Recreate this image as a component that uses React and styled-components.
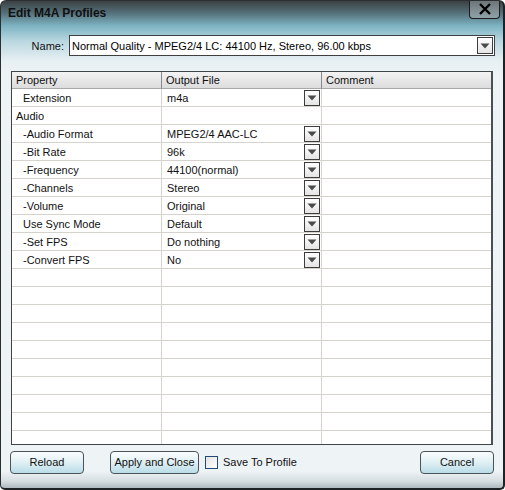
import styled, { createGlobalStyle } from "styled-components";

const Global = createGlobalStyle`
  html, body { margin: 0; padding: 0; background: #ffffff; }
  body { font-family: Tahoma, "Liberation Sans", "DejaVu Sans", sans-serif; font-size: 11px; color: #000; }
`;

const rows = [
  { name: "Extension", value: "m4a", indent: true, drop: true },
  { name: "Audio", value: "", indent: false, drop: false },
  { name: "-Audio Format", value: "MPEG2/4 AAC-LC", indent: true, drop: true },
  { name: "-Bit Rate", value: "96k", indent: true, drop: true },
  { name: "-Frequency", value: "44100(normal)", indent: true, drop: true },
  { name: "-Channels", value: "Stereo", indent: true, drop: true },
  { name: "-Volume", value: "Original", indent: true, drop: true },
  { name: "Use Sync Mode", value: "Default", indent: true, drop: true },
  { name: "-Set FPS", value: "Do nothing", indent: true, drop: true },
  { name: "-Convert FPS", value: "No", indent: true, drop: true },
];

const emptyRows = 10;

function Arrow() {
  return (
    <svg width="10" height="6" viewBox="0 0 10 6">
      <polygon points="0.5,0.5 9.5,0.5 5,5.5" fill="#4a4a4a" />
    </svg>
  );
}

export default function App() {
  return (
    <>
      <Global />
      <Window>
        <TitleBar>
          <Title>Edit M4A Profiles</Title>
          <CloseButton>
            <svg width="14" height="12" viewBox="0 0 14 12">
              <path d="M2 1 L12 11 M12 1 L2 11" stroke="#000" strokeWidth="2.4" />
            </svg>
          </CloseButton>
        </TitleBar>

        <NameRow>
          <Label>Name:</Label>
          <Select>
            <SelectText>Normal Quality - MPEG2/4 LC: 44100 Hz, Stereo, 96.00 kbps</SelectText>
            <DropBox $big>
              <Arrow />
            </DropBox>
          </Select>
        </NameRow>

        <TableFrame>
          <Grid>
            <HeadCell>Property</HeadCell>
            <HeadCell>Output File</HeadCell>
            <HeadCell $last>Comment</HeadCell>
            {rows.map((r) => (
              <Row key={r.name}>
                <Cell $indent={r.indent}>{r.name}</Cell>
                <Cell $value>
                  <span>{r.value}</span>
                  {r.drop && (
                    <DropBox>
                      <Arrow />
                    </DropBox>
                  )}
                </Cell>
                <Cell $last />
              </Row>
            ))}
            {Array.from({ length: emptyRows }).map((_, i) => (
              <Row key={"e" + i}>
                <Cell />
                <Cell />
                <Cell $last />
              </Row>
            ))}
          </Grid>
        </TableFrame>

        <Footer>
          <Button $w={74}>Reload</Button>
          <Button $w={89} $gap={26}>Apply and Close</Button>
          <Check>
            <Box />
            <span>Save To Profile</span>
          </Check>
          <Spacer />
          <Button $w={74}>Cancel</Button>
        </Footer>
      </Window>
    </>
  );
}

const Window = styled.div`
  box-sizing: border-box;
  width: 505px;
  height: 490px;
  display: flex;
  flex-direction: column;
  border: 1px solid #2b2f31;
  border-right: 2px solid #1e2224;
  border-bottom: 2px solid #1e2224;
  border-radius: 6px 6px 5px 5px;
  overflow: hidden;
  background: linear-gradient(
    to bottom,
    #3b4043 0px,
    #55707a 12px,
    #7eb4c3 25px,
    #b9d7e0 40px,
    #e7f0f3 60px,
    #eef3f6 75px,
    #eef3f6 470px,
    #d6dee1 480px,
    #a9b4b9 488px
  );
`;

const TitleBar = styled.div`
  height: 25px;
  flex: none;
  display: flex;
  align-items: center;
  justify-content: space-between;
  padding-left: 7px;
`;

const Title = styled.div`
  font-weight: bold;
  font-size: 12px;
  color: #101010;
  margin-top: -1px;
`;

const CloseButton = styled.div`
  align-self: flex-start;
  margin-top: -1px;
  margin-right: 3px;
  width: 31px;
  height: 19px;
  box-sizing: border-box;
  border: 1px solid #1c1c1c;
  border-top: none;
  border-radius: 0 0 4px 4px;
  background: linear-gradient(to bottom, #6b7275, #8fa3a9);
  display: flex;
  align-items: center;
  justify-content: center;
`;

const NameRow = styled.div`
  display: flex;
  align-items: center;
  margin-top: 9px;
  height: 21px;
  padding-right: 8px;
`;

const Label = styled.div`
  width: 67px;
  text-align: right;
  padding-right: 4px;
  box-sizing: border-box;
  font-size: 11px;
  color: #111;
`;

const Select = styled.div`
  flex: 1;
  height: 21px;
  box-sizing: border-box;
  border: 1px solid #3f3f3f;
  background: #fff;
  display: flex;
  align-items: center;
  justify-content: space-between;
  padding-left: 2px;
  padding-right: 1px;
  margin-left: 1px;
`;

const SelectText = styled.span`
  font-size: 11px;
`;

const DropBox = styled.div`
  width: 16px;
  height: ${(p) => (p.$big ? 17 : 16)}px;
  box-sizing: border-box;
  border: 1px solid #3c3c3c;
  background: linear-gradient(to bottom, #ffffff, #e4e4e4);
  display: flex;
  align-items: center;
  justify-content: center;
  flex: none;
`;

const TableFrame = styled.div`
  margin: 15px 10px 0 10px;
  height: 374px;
  box-sizing: border-box;
  border: 1px solid #3e4447;
  border-right: 2px solid #4a5053;
  background: #fff;
  overflow: hidden;
  flex: none;
`;

const Grid = styled.div`
  display: grid;
  grid-template-columns: 150px 160px 170px;
  grid-auto-rows: 18px;
  grid-template-rows: 17px;
`;

const HeadCell = styled.div`
  box-sizing: border-box;
  height: 17px;
  padding-left: 4px;
  display: flex;
  align-items: center;
  background: linear-gradient(to bottom, #f3f3f3, #dcdcdc);
  border-right: 1px solid ${(p) => (p.$last ? "#b5b5b5" : "#8a8a8a")};
  border-bottom: 1px solid #a8a8a8;
  color: #111;
`;

const Row = styled.div`
  display: contents;
`;

const Cell = styled.div`
  box-sizing: border-box;
  height: 18px;
  border-right: 1px solid #d6d3cc;
  border-bottom: 1px solid #d6d3cc;
  display: flex;
  align-items: center;
  justify-content: ${(p) => (p.$value ? "space-between" : "flex-start")};
  padding-left: ${(p) => (p.$indent ? 11 : p.$value ? 5 : 4)}px;
  padding-right: ${(p) => (p.$value ? 1 : 0)}px;
  color: #111;
  white-space: nowrap;
`;

const Footer = styled.div`
  display: flex;
  align-items: center;
  margin-top: 5px;
  padding: 0 9px 0 9px;
  height: 24px;
`;

const Button = styled.div`
  width: ${(p) => p.$w}px;
  margin-left: ${(p) => p.$gap || 0}px;
  height: 23px;
  box-sizing: border-box;
  border: 1px solid #4c5357;
  border-radius: 4px;
  background: linear-gradient(to bottom, #fbfdfe 0%, #e3f1f5 45%, #b9dde7 100%);
  display: flex;
  align-items: center;
  justify-content: center;
  font-size: 11px;
  white-space: nowrap;
  color: #111;
`;

const Check = styled.label`
  display: flex;
  align-items: center;
  gap: 5px;
  margin-left: 6px;
  font-size: 11px;
  color: #111;
`;

const Box = styled.span`
  width: 13px;
  height: 13px;
  box-sizing: border-box;
  border: 1px solid #1f4a7a;
  background: linear-gradient(135deg, #e3e3e3, #ffffff);
`;

const Spacer = styled.div`
  flex: 1;
`;
